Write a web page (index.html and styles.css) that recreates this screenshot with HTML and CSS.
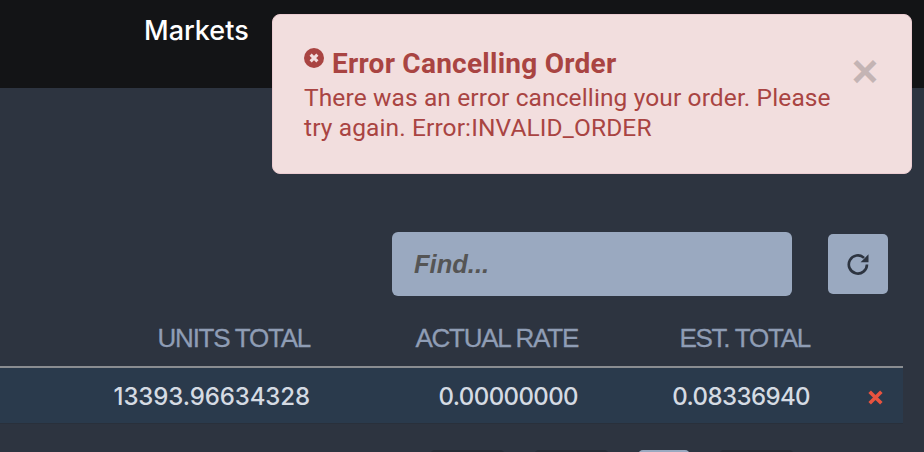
FILE: index.html
```html
<!DOCTYPE html>
<html lang="en">

<head>
    <meta charset="UTF-8">
    <meta name="viewport" content="width=device-width, initial-scale=1.0">
    <title>Open Orders</title>
    <link rel="stylesheet" href="styles.css">
</head>

<body>
    <header class="topbar">
        <a class="nav-link">Markets</a>
    </header>

    <main class="content">
        <div class="toolbar">
            <input class="find" type="text" placeholder="Find...">
            <button class="refresh" aria-label="Refresh">
                <svg viewBox="0 0 24 24" width="29" height="29">
                    <path d="M19 12a7.500 7.500 0 1 1-2.400-5.500" fill="none" stroke="#2d3440" stroke-width="2.200" />
                    <path d="M20.300 3.600v6.600h-6.600z" fill="#2d3440" />
                </svg>
            </button>
        </div>

        <table class="orders">
            <thead>
                <tr>
                    <th class="col-units">UNITS TOTAL</th>
                    <th class="col-rate">ACTUAL RATE</th>
                    <th class="col-total">EST. TOTAL</th>
                    <th class="col-x"></th>
                </tr>
            </thead>
            <tbody>
                <tr>
                    <td class="units">13393.96634328</td>
                    <td>0.00000000</td>
                    <td>0.08336940</td>
                    <td class="cancel">
                        <svg viewBox="0 0 16 16" width="17" height="17">
                            <path d="M2.500 2.500l11 11M13.500 2.500l-11 11" stroke="#e8533f" stroke-width="3.400" />
                        </svg>
                    </td>
                </tr>
            </tbody>
        </table>

        <div class="pager">
            <span class="page"></span>
            <span class="page"></span>
            <span class="page current"></span>
            <span class="page"></span>
        </div>
    </main>

    <div class="alert">
        <div class="alert-body">
            <h4>
                <svg class="alert-icon" viewBox="0 0 20 20" width="20" height="20">
                    <circle cx="10" cy="10" r="10" fill="#a94442" />
                    <path d="M6.600 6.600l6.800 6.800M13.400 6.600l-6.800 6.800" stroke="#f2dede" stroke-width="3" />
                </svg>
                Error Cancelling Order
            </h4>
            <p>There was an error cancelling your order. Please try again. Error:INVALID_ORDER</p>
        </div>
        <button class="close" aria-label="Close">&times;</button>
    </div>
</body>

</html>
```
FILE: styles.css
```css
* {
    box-sizing: border-box;
}

body {
    margin: 0;
    height: 452px;
    overflow: hidden;
    background-color: #2d3440;
    font-family: "Inter", "Liberation Sans", Arial, sans-serif;
}

.topbar {
    height: 88px;
    padding: 15px 0 0 144px;
    background-color: #131416;
}

.nav-link {
    color: #fff;
    font-size: 27px;
    font-weight: 500;
    line-height: 32px;
}

.content {
    padding-top: 144px;
}

.toolbar {
    display: flex;
    align-items: center;
    height: 64px;
    padding-left: 392px;
}

.find {
    width: 400px;
    height: 64px;
    padding: 0 22px;
    border: none;
    border-radius: 6px;
    background-color: #9aa9c0;
    font-family: "Liberation Sans", Arial, sans-serif;
    font-size: 25.500px;
    font-weight: bold;
    font-style: italic;
}

.find::placeholder {
    color: #555;
    opacity: 1;
}

.refresh {
    display: flex;
    align-items: center;
    justify-content: center;
    width: 60px;
    height: 60px;
    margin-left: 36px;
    padding: 0;
    border: none;
    border-radius: 5px;
    background-color: #9aa9c0;
}

.orders {
    width: 903px;
    margin-top: 24px;
    border-collapse: collapse;
    table-layout: fixed;
}

.orders th {
    height: 47px;
    padding: 0 0 10px;
    border-bottom: 2px solid #8a8d91;
    color: #8f9db5;
    font-family: "Liberation Sans", Arial, sans-serif;
    font-size: 26px;
    font-weight: normal;
    letter-spacing: -1.250px;
    text-align: right;
    -webkit-text-stroke: 0.300px #8f9db5;
}

.col-units {
    width: 310px;
}

.col-rate {
    width: 268px;
}

.col-total {
    width: 232px;
}

.orders td {
    height: 56px;
    padding: 2px 0 0;
    border-bottom: 1px solid #29303b;
    background-color: #2a3a4c;
    color: #d5dbe3;
    font-size: 24px;
    font-weight: 500;
    letter-spacing: -0.600px;
    text-align: right;
}

.orders td.units {
    letter-spacing: -0.100px;
}

.orders td.cancel {
    padding: 5px 19px 0 0;
    line-height: 0;
}

.pager {
    display: flex;
    gap: 29px;
    margin-top: 26px;
    padding-left: 430px;
}

.page {
    width: 75px;
    height: 20px;
    border-radius: 5px;
    background-color: #262c36;
}

.page.current {
    width: 52px;
    background-color: #9aa9c0;
}

.alert {
    position: absolute;
    top: 14px;
    left: 272px;
    display: flex;
    width: 640px;
    height: 160px;
    padding: 31px 26px 0 31px;
    border: 1px solid #ebccd1;
    border-radius: 8px;
    background-color: #f2dede;
    color: #a94442;
}

.alert-body {
    flex: 1;
}

.alert h4 {
    display: flex;
    align-items: flex-start;
    gap: 8px;
    margin: 0 0 1px;
    font-family: "Roboto", "Liberation Sans", Arial, sans-serif;
    font-size: 28px;
    font-weight: 700;
    letter-spacing: 0.250px;
    line-height: 36px;
}

.alert-icon {
    margin-top: 2px;
}

.alert p {
    margin: 0;
    font-family: "Roboto", "Liberation Sans", Arial, sans-serif;
    font-size: 24.500px;
    letter-spacing: 0.120px;
    line-height: 30px;
}

.close {
    width: 40px;
    height: 40px;
    margin: 5px 0 0 8px;
    padding: 0;
    border: none;
    background: none;
    color: #c4b4b4;
    font-family: "Liberation Sans", Arial, sans-serif;
    font-size: 46px;
    font-weight: bold;
    line-height: 40px;
}
```
